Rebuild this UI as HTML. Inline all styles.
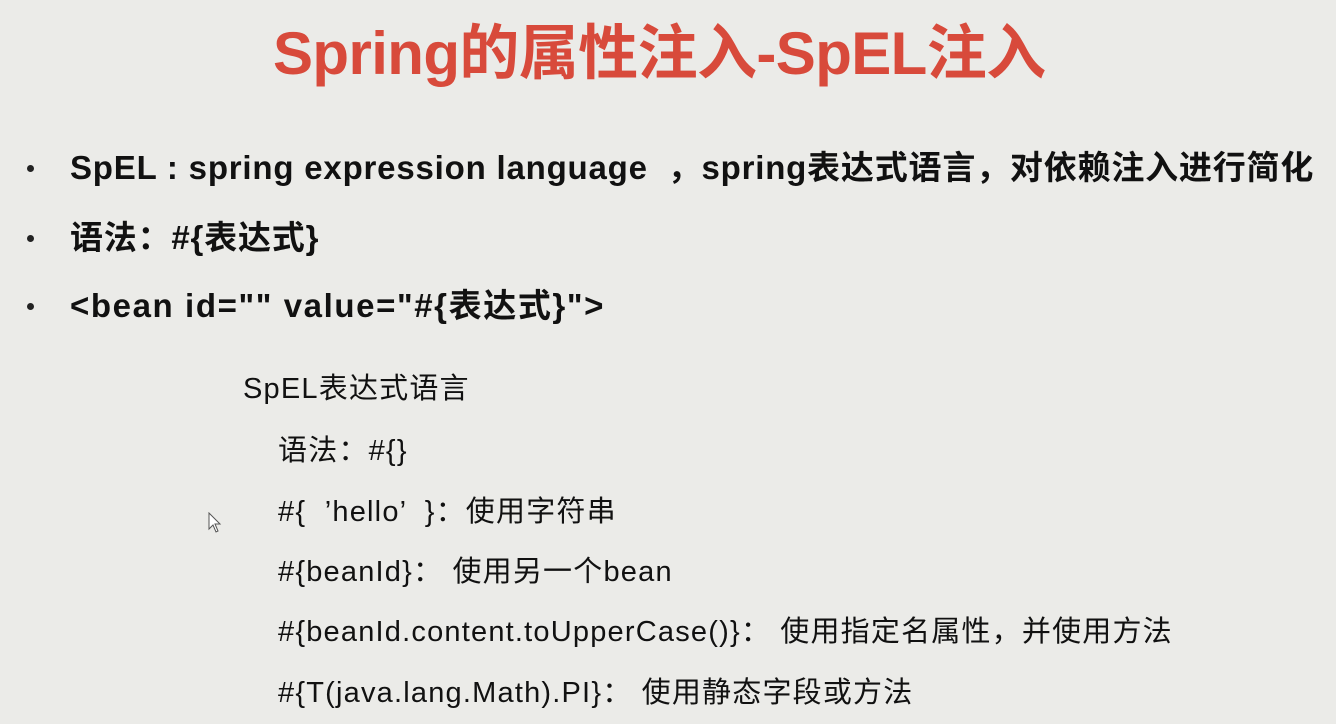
<!DOCTYPE html>
<html><head><meta charset="utf-8"><style>
body{margin:0;width:1336px;height:724px;background:#ebebe8;overflow:hidden;position:relative;font-family:"Liberation Sans","Noto Sans CJK SC",sans-serif;color:#111}
.a{position:absolute;white-space:nowrap;line-height:1}
.t{left:273px;top:24px;font-size:60px;font-weight:bold;color:#d84a3b;letter-spacing:-0.6px}
.b{font-size:33px;font-weight:bold;left:70px;letter-spacing:0.8px}
.d{position:absolute;left:27px;width:7px;height:7px;border-radius:50%;background:#222}
.s{font-size:29px;letter-spacing:1.2px}
</style></head><body>
<div class="a t">Spring的属性注入-SpEL注入</div>
<div class="d" style="top:165px"></div>
<div class="a b" style="top:151px">SpEL : spring expression language &nbsp;，spring表达式语言，对依赖注入进行简化</div>
<div class="d" style="top:235px"></div>
<div class="a b" style="top:221px">语法：#{表达式}</div>
<div class="d" style="top:303px"></div>
<div class="a b" style="top:289px;letter-spacing:1.6px">&lt;bean id="" value="#{表达式}"&gt;</div>
<div class="a s" style="left:243px;top:375px">SpEL表达式语言</div>
<div class="a s" style="left:278px;top:437px">语法：#{}</div>
<div class="a s" style="left:278px;top:498px">#{ &nbsp;’hello’ &nbsp;}：使用字符串</div>
<div class="a s" style="left:278px;top:558px">#{beanId}： 使用另一个bean</div>
<div class="a s" style="left:278px;top:618px">#{beanId.content.toUpperCase()}： 使用指定名属性，并使用方法</div>
<div class="a s" style="left:278px;top:679px">#{T(java.lang.Math).PI}： 使用静态字段或方法</div>
<svg class="a" style="left:208px;top:512px" width="16" height="22" viewBox="0 0 16 22"><path d="M1 1 L1 17 L5 13 L8 20 L10 19 L7 12 L12 12 Z" fill="#fff" stroke="#555" stroke-width="1"/></svg>
</body></html>
